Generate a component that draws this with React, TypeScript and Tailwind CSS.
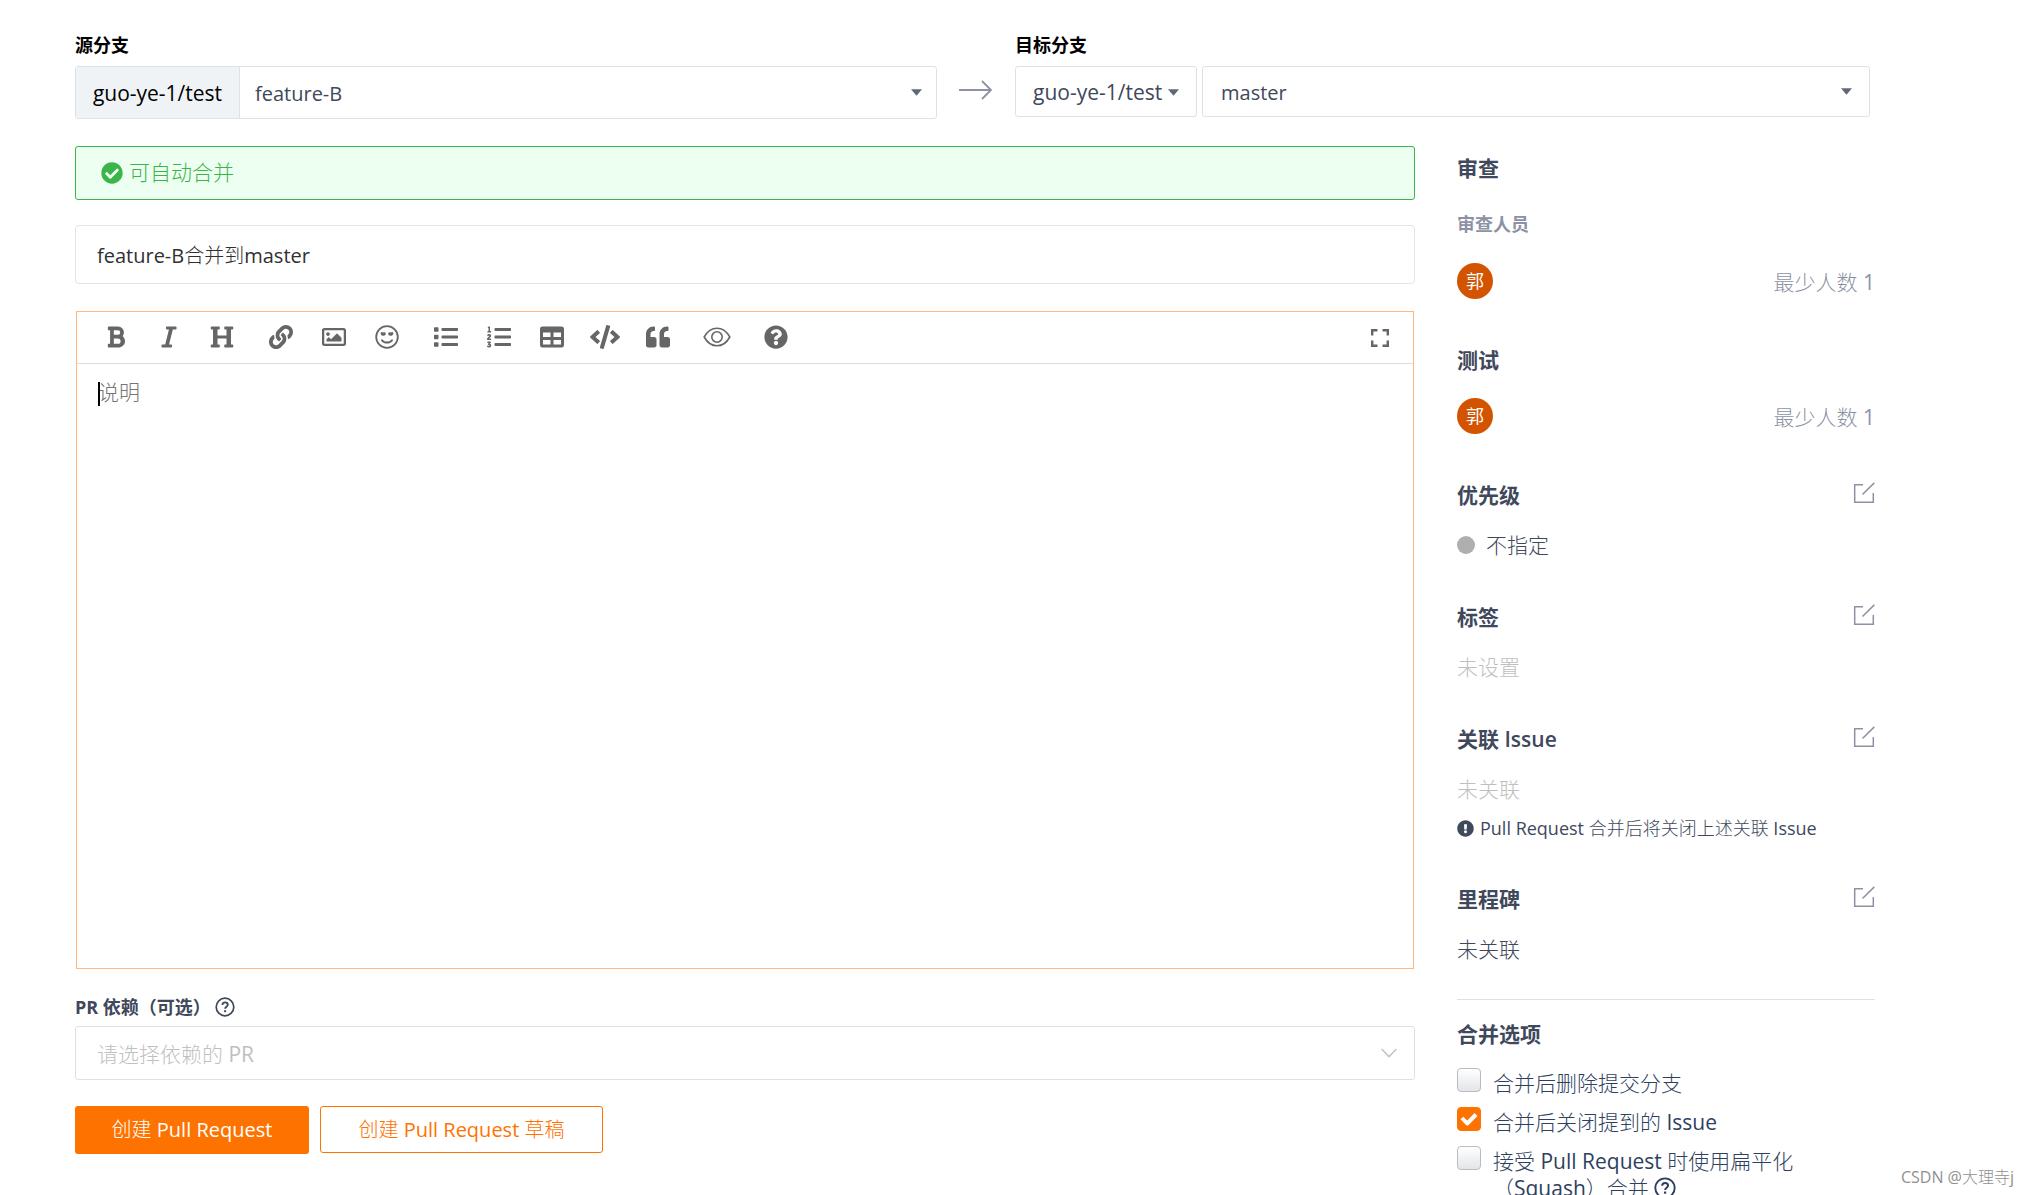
import type { ReactNode } from 'react'

import {
  FaBold,
  FaCheckCircle,
  FaCode,
  FaExclamationCircle,
  FaHeading,
  FaItalic,
  FaLink,
  FaList,
  FaListOl,
  FaQuestionCircle,
  FaQuoteLeft,
  FaRegImage,
  FaTable,
} from 'react-icons/fa'

// body copy pairs regular Latin with the lighter CJK cut, titles use the full family
const bodyFont = "font-['Open_Sans','Noto_Sans_CJK_SC_Light','Noto_Sans_CJK_SC',sans-serif]"
const titleFont = "font-['Open_Sans','Noto_Sans_CJK_SC',sans-serif]"

function Caret({ className }: { className: string }) {
  return (
    <svg viewBox="0 0 10 6" className={`pointer-events-none absolute h-[7px] w-[11px] fill-[#5f6779] ${className}`}>
      <path d="M0 0h10L5 6z" />
    </svg>
  )
}

function SmileIcon() {
  return (
    <svg viewBox="0 0 24 24" className="size-6" fill="none" stroke="currentColor" strokeLinecap="round">
      <circle cx="12" cy="12" r="10.8" strokeWidth="1.8" />
      <path d="M7 15.2c2.200 3.200 7.800 3.200 10 0" strokeWidth="2" />
      <path
        d="M5.800 7.600c.6-1 1.900-.9 2.300.1 1.100-1 2.900-.2 2.700 1.200-.2 1.400-2 1.900-3.300 1.900C6.200 10.200 5.200 9 5.800 7.600zM18.200 7.600c-.6-1-1.900-.9-2.300.1-1.100-1-2.900-.2-2.700 1.200.2 1.400 2 1.900 3.300 1.900 1.300-.6 2.300-1.800 1.700-3.200z"
        fill="currentColor"
        stroke="none"
      />
    </svg>
  )
}

function EyeIcon() {
  return (
    <svg viewBox="0 0 28 20" className="h-5 w-7" fill="none" stroke="currentColor" strokeWidth="1.6">
      <path d="M1.2 10C4.5 4 9 1.2 14 1.2S23.5 4 26.8 10C23.5 16 19 18.800 14 18.800S4.500 16 1.200 10z" />
      <circle cx="14" cy="10" r="5.2" />
    </svg>
  )
}

function FullscreenIcon() {
  return (
    <svg viewBox="0 0 18 18" className="size-[18px]" fill="none" stroke="currentColor" strokeWidth="2.4">
      <path d="M1.2 6.5V1.2h5.300M11.500 1.200h5.300v5.300M16.800 11.500v5.300h-5.300M6.500 16.800H1.200v-5.300" />
    </svg>
  )
}

function HelpIcon({ className }: { className: string }) {
  return (
    <svg viewBox="0 0 20 20" className={className} fill="none" stroke="currentColor">
      <circle cx="10" cy="10" r="8.8" strokeWidth="1.7" />
      <path d="M7.4 8c0-1.600 1.100-2.600 2.700-2.600s2.700 1 2.700 2.400c0 1.900-2.700 2-2.700 4" strokeWidth="1.8" />
      <path d="M10.1 13.200v2" strokeWidth="2" />
    </svg>
  )
}

function EditIcon() {
  return (
    <svg viewBox="0 0 22 22" className="size-[22px]" fill="none" stroke="currentColor" strokeWidth="1.5">
      <path d="M10 2.700H1.700v17.600h18.600v-9.300M9.500 12.500L21.300.9" />
    </svg>
  )
}

const toolGroups: { label: string; icon: ReactNode }[][] = [
  [
    { label: '粗体', icon: <FaBold /> },
    { label: '斜体', icon: <FaItalic /> },
    { label: '标题', icon: <FaHeading /> },
  ],
  [
    { label: '链接', icon: <FaLink /> },
    { label: '图片', icon: <FaRegImage /> },
    { label: '表情', icon: <SmileIcon /> },
  ],
  [
    { label: '无序列表', icon: <FaList /> },
    { label: '有序列表', icon: <FaListOl /> },
    { label: '表格', icon: <FaTable /> },
    { label: '代码', icon: <FaCode className="h-6 w-[30px]" /> },
    { label: '引用', icon: <FaQuoteLeft /> },
  ],
  [{ label: '预览', icon: <EyeIcon /> }],
  [{ label: '帮助', icon: <FaQuestionCircle /> }],
]

function Editor() {
  return (
    <div className="mx-px mt-[27px] border border-[#ffb980]">
      <div className="flex h-[52px] items-start justify-between border-b border-[#dcdcdc] pt-[9px] pr-6 pl-4 text-[24px] text-[#666]">
        <div className="flex gap-[14px]">
          {toolGroups.map((group) => (
            <div key={group[0].label} className="flex gap-2">
              {group.map((tool) => (
                <button
                  key={tool.label}
                  type="button"
                  aria-label={tool.label}
                  className="flex h-8 w-[45px] items-center justify-center"
                >
                  {tool.icon}
                </button>
              ))}
            </div>
          ))}
        </div>
        <button type="button" aria-label="全屏" className="flex h-[34px] items-center">
          <FullscreenIcon />
        </button>
      </div>
      <div className="relative">
        <textarea
          aria-label="说明"
          placeholder="说明"
          className="block h-[604px] w-full resize-none px-[21px] py-[13px] leading-[30px] outline-none placeholder:text-[#757575]"
        />
        <span className="absolute top-[18px] left-[21px] h-6 w-[2px] bg-black" />
      </div>
    </div>
  )
}

function SectionTitle({ title, editable }: { title: string; editable?: boolean }) {
  return (
    <div className="flex h-7 items-start justify-between">
      <h3 className={`leading-7 font-semibold ${titleFont}`}>{title}</h3>
      {editable ? (
        <button type="button" aria-label={`编辑${title}`} className="pt-px text-[#8c92a4]">
          <EditIcon />
        </button>
      ) : null}
    </div>
  )
}

function Reviewer() {
  return (
    <div className="flex h-9 items-center justify-between">
      <span
        className={`flex size-9 items-center justify-center rounded-full bg-[#d35400] text-[18px] text-white ${titleFont}`}
      >
        郭
      </span>
      <span className="pt-px text-[#8c92a4]">最少人数 1</span>
    </div>
  )
}

function MergeOption({ id, checked, children }: { id: string; checked?: boolean; children: ReactNode }) {
  return (
    <div className="flex items-start gap-3">
      <span className="relative flex size-6 shrink-0">
        <input
          id={id}
          type="checkbox"
          defaultChecked={checked}
          className="peer size-6 appearance-none rounded-[4px] border border-[#b9bcc2] bg-linear-to-b from-white to-[#e3e5e9] checked:border-[#fe7300] checked:bg-[#fe7300] checked:bg-none"
        />
        <svg
          viewBox="0 0 24 24"
          className="pointer-events-none absolute inset-0 hidden size-6 peer-checked:block"
          fill="none"
          stroke="white"
          strokeWidth="4"
        >
          <path d="M5 11l5.200 5.500L19 7.500" strokeLinejoin="round" />
        </svg>
      </span>
      <label htmlFor={id} className="pt-[2px] leading-[27px] text-[#2f3f5f]">
        {children}
      </label>
    </div>
  )
}

function Sidebar() {
  return (
    <aside className="w-[418px] shrink-0 pt-2 leading-7">
      <SectionTitle title="审查" />
      <h4 className={`mt-[30px] text-[18px] leading-6 font-bold text-[#8c92a4] ${titleFont}`}>审查人员</h4>
      <div className="mt-[27px]">
        <Reviewer />
      </div>

      <div className="mt-[47px] space-y-6">
        <SectionTitle title="测试" />
        <Reviewer />
      </div>

      <div className="mt-[47px] space-y-[22px]">
        <SectionTitle title="优先级" editable />
        <p className="flex items-center gap-[11px]">
          <span className="size-[18px] rounded-full bg-[#afafaf]" />
          不指定
        </p>
      </div>

      <div className="mt-11 space-y-[22px]">
        <SectionTitle title="标签" editable />
        <p className="text-[#bfbfbf]">未设置</p>
      </div>

      <div className="mt-11">
        <SectionTitle title="关联 Issue" editable />
        <p className="mt-[22px] text-[#bfbfbf]">未关联</p>
        <p className="mt-[13px] flex items-center gap-[6px] text-[18px] leading-6">
          <FaExclamationCircle className="size-[17px]" />
          Pull Request 合并后将关闭上述关联 Issue
        </p>
      </div>

      <div className="mt-[45px] space-y-[22px]">
        <SectionTitle title="里程碑" editable />
        <p>未关联</p>
      </div>

      <div className="mt-9 border-t border-[#dce1e6] pt-5">
        <SectionTitle title="合并选项" />
        <div className="mt-5 space-y-[10px]">
          <MergeOption id="prune-branch">合并后删除提交分支</MergeOption>
          <MergeOption id="close-issue" checked>
            合并后关闭提到的 Issue
          </MergeOption>
          <MergeOption id="squash">
            接受 Pull Request 时使用扁平化
            <br />
            （Squash）合并 <HelpIcon className="inline size-[22px] align-[-3px]" />
          </MergeOption>
        </div>
      </div>
    </aside>
  )
}

function BranchBar() {
  return (
    <div className="mr-[5px] grid grid-cols-[862fr_78px_855fr]">
      <div>
        <label htmlFor="source-branch" className={`block text-[18px] leading-6 font-bold text-black ${titleFont}`}>
          源分支
        </label>
        <div className="mt-[9px] flex h-[53px] rounded-[3px] border border-[#dce3e8]">
          <span className="flex w-[164px] items-center justify-center border-r border-[#dce3e8] bg-[#eff3f6] pt-[2px] text-black">
            guo-ye-1/test
          </span>
          <div className="relative flex-1">
            <select
              id="source-branch"
              className="size-full appearance-none px-[15px] pt-[2px] text-[20px] outline-none"
            >
              <option>feature-B</option>
            </select>
            <Caret className="top-[22px] right-[14px]" />
          </div>
        </div>
      </div>
      <svg
        viewBox="0 0 34 20"
        className="mt-[47px] h-5 w-[34px] justify-self-center"
        fill="none"
        stroke="#8c92a4"
        strokeWidth="1.8"
      >
        <path d="M0 10h32M23 1l9 9-9 9" />
      </svg>
      <div>
        <label htmlFor="target-branch" className={`block text-[18px] leading-6 font-bold text-black ${titleFont}`}>
          目标分支
        </label>
        <div className="mt-[9px] flex h-[51px] gap-[5px]">
          <div className="relative w-[182px]">
            <select
              aria-label="目标仓库"
              className="size-full appearance-none rounded-[3px] border border-[#dce3e8] px-[17px] pt-[2px] outline-none"
            >
              <option>guo-ye-1/test</option>
            </select>
            <Caret className="top-[23px] right-[18px]" />
          </div>
          <div className="relative flex-1">
            <select
              id="target-branch"
              className="size-full appearance-none rounded-[3px] border border-[#dce3e8] px-[18px] pt-[2px] text-[20px] outline-none"
            >
              <option>master</option>
            </select>
            <Caret className="top-[22px] right-[18px]" />
          </div>
        </div>
      </div>
    </div>
  )
}

export default function App() {
  return (
    <div
      className={`relative h-screen overflow-hidden bg-white pt-[33px] pr-[152px] pl-[75px] text-[21px] text-[#40485b] ${bodyFont}`}
    >
      <BranchBar />

      <div className="mt-[27px] flex gap-[42px]">
        <main className="min-w-0 flex-1">
          <div className="flex h-[54px] items-center gap-[6px] rounded-[3px] border border-[#3bb54a] bg-[#edfff1] px-[25px] pb-px text-[#3bb54a]">
            <FaCheckCircle className="size-[22px]" />
            可自动合并
          </div>

          <input
            type="text"
            aria-label="标题"
            defaultValue="feature-B合并到master"
            className="mt-[25px] block h-[59px] w-full rounded-[4px] border border-[#e1e4e8] px-[21px] text-[20px] text-[#303030] outline-none"
          />

          <Editor />

          <div className="mt-[26px] flex items-center gap-1">
            <label htmlFor="pr-deps" className={`text-[18px] leading-6 font-bold ${titleFont}`}>
              PR 依赖（可选）
            </label>
            <HelpIcon className="size-5" />
          </div>
          <div className="relative mt-[7px] h-[54px]">
            <select
              id="pr-deps"
              className="size-full appearance-none rounded-[3px] border border-[#dce3e8] px-[21px] pt-1 text-[#bfbfbf] outline-none"
            >
              <option>请选择依赖的 PR</option>
            </select>
            <svg
              viewBox="0 0 16 10"
              className="pointer-events-none absolute top-[22px] right-[18px] h-[10px] w-4"
              fill="none"
              stroke="#c0c4cc"
              strokeWidth="1.5"
            >
              <path d="M.6 1L8 8.600 15.400 1" />
            </svg>
          </div>

          <div className="mt-[26px] flex gap-[11px] text-[20px]">
            <button type="submit" className="h-12 w-[234px] rounded-[3px] bg-[#fe7300] text-white">
              创建 Pull Request
            </button>
            <button
              type="button"
              className="h-[47px] w-[283px] rounded-[3px] border border-[#fe7300] text-[#fe7300]"
            >
              创建 Pull Request 草稿
            </button>
          </div>
        </main>

        <Sidebar />
      </div>

      <div className="absolute right-[13px] bottom-[6px] text-[16px] leading-6 text-[#909090]">CSDN @大理寺j</div>
    </div>
  )
}
